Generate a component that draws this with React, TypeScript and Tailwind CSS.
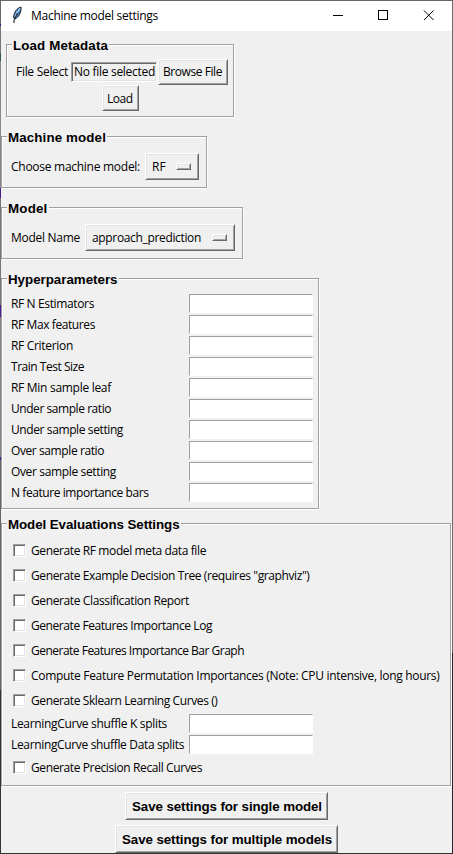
import { useLayoutEffect, useRef, useState, type ReactNode } from 'react';

/** Single line of text whose tracking is adjusted so that it spans `w` pixels. */
function Fit({ w, children, className = '' }: { w: number; children: string; className?: string }) {
  const ref = useRef<HTMLSpanElement>(null);
  const [tracking, setTracking] = useState(0);
  useLayoutEffect(() => {
    if (ref.current) {
      const natural = ref.current.getBoundingClientRect().width;
      setTracking((w - natural) / children.length);
    }
  }, []);
  return (
    <span ref={ref} className={`inline-block shrink-0 whitespace-pre ${className}`} style={{ letterSpacing: `${tracking}px` }}>
      {children}
    </span>
  );
}

function Group({ title, titleWidth, className, children }: { title: string; titleWidth: number; className: string; children: ReactNode }) {
  return (
    <section className={`flex flex-col border border-[#a0a0a0] shadow-[1px_1px_0_#fff,inset_1px_1px_0_#fff] ${className}`}>
      <h2 className="-mt-2 ml-[5px] flex h-4 w-fit shrink-0 items-center bg-[#f0f0f0] px-px pt-px font-['Liberation_Sans',Arial,sans-serif] text-[13.333px] font-bold leading-4">
        <Fit w={titleWidth}>{title}</Fit>
      </h2>
      {children}
    </section>
  );
}

const raised =
  'bg-[#f0f0f0] border border-t-white border-l-white border-b-[#696969] border-r-[#696969] shadow-[inset_1px_1px_0_#e3e3e3,inset_-1px_-1px_0_#a0a0a0]';
const sunken =
  'border border-t-[#a0a0a0] border-l-[#a0a0a0] border-b-white border-r-white shadow-[inset_1px_1px_0_#696969,inset_-1px_-1px_0_#e3e3e3]';

function Field({ label, w }: { label: string; w: number }) {
  return (
    <div className="flex h-[21px] items-center pl-[9px]">
      <div className="w-[178px] pt-px">
        <Fit w={w}>{label}</Fit>
      </div>
      <input className="h-[19px] w-[124px] border border-b-white border-l-[#a0a0a0] border-r-white border-t-[#a0a0a0] bg-white outline-none" />
    </div>
  );
}

function Check({ label, w }: { label: string; w: number }) {
  return (
    <label className="flex h-[25px] items-center gap-[5px] pl-[11px]">
      <span className={`size-[13px] bg-white ${sunken}`} />
      <Fit w={w}>{label}</Fit>
    </label>
  );
}

function Option({ label, w, className }: { label: string; w: number; className: string }) {
  return (
    <button className={`flex h-[27px] items-center justify-between pl-[6px] pr-[7px] ${raised} ${className}`}>
      <Fit w={w}>{label}</Fit>
      <span className={`h-[7px] w-[15px] ${raised}`} />
    </button>
  );
}

const fields: [string, number][] = [
  ['RF N Estimators', 83],
  ['RF Max features', 84],
  ['RF Criterion', 62],
  ['Train Test Size', 73],
  ['RF Min sample leaf', 100],
  ['Under sample ratio', 100],
  ['Under sample setting', 112],
  ['Over sample ratio', 93],
  ['Over sample setting', 105],
  ['N feature importance bars', 137.5],
];

const checks: [string, number][] = [
  ['Generate RF model meta data file', 175],
  ['Generate Example Decision Tree (requires "graphviz")', 278.5],
  ['Generate Classification Report', 158],
  ['Generate Features Importance Log', 181],
  ['Generate Features Importance Bar Graph', 213],
  ['Compute Feature Permutation Importances (Note: CPU intensive, long hours)', 408.5],
  ['Generate Sklearn Learning Curves ()', 186.5],
];

export default function App() {
  return (
    <div className="flex h-[854px] w-[453px] overflow-hidden bg-[#f0f0f0] font-['Open_Sans','Noto_Sans',sans-serif] text-[12px] leading-4 text-black">
      <div className="w-px shrink-0 bg-[linear-gradient(#666_0_24px,#2a1a80_24px_26px,#777_26px_53px,#355_53px_61px,#888_61px_188px,#4a1a90_188px_198px,#777_198px_305px,#4a1a90_305px_317px,#888_317px_457px,#4a1a90_457px_460px,#666_460px_690px,#333_690px)]" />
      <div className="flex h-[854px] w-[451px] shrink-0 flex-col border-b border-t border-b-[#333] border-t-[#666]">
        <header className="flex h-[30px] shrink-0 items-center bg-white">
          <svg className="mb-[3px] ml-[10px] mr-[8px]" width="12" height="18" viewBox="0 0 12 18">
            <path d="M10 1C6 2 3 6 2.5 11.5L4 13C8 11 10.5 6 10 1Z" fill="#3f78b8" stroke="#1b2430" strokeWidth="1" />
            <path d="M9 2.5C6.500 5 5 8 4 11" fill="none" stroke="#a9d2f5" strokeWidth="1.500" />
            <path d="M6.500 7L3 14V17" fill="none" stroke="#111" strokeWidth="1" />
          </svg>
          <Fit w={127}>Machine model settings</Fit>
          <svg className="mb-px ml-auto mr-[17px]" width="102" height="11" viewBox="0 0 102 11" fill="none" stroke="#000">
            <path d="M0 5.500H10M45.500 .5H54.500V9.500H45.500Z" shapeRendering="crispEdges" />
            <path d="M91 .5L100.500 10M100.500 .5L91 10" />
          </svg>
        </header>

        <Group title="Load Metadata" titleWidth={95} className="ml-[5px] mt-[13px] h-[73px] w-[228px] shrink-0">
          <div className="mt-[6px] flex h-[26px] items-center pl-[9px]">
            <div className="w-[55px]">
              <Fit w={52}>File Select</Fit>
            </div>
            <div className={`mr-px flex h-[20px] w-[86px] items-center pl-[2px] ${sunken}`}>
              <Fit w={81}>No file selected</Fit>
            </div>
            <button className={`flex h-[26px] w-[70px] items-center pl-1 ${raised}`}>
              <Fit w={59}>Browse File</Fit>
            </button>
          </div>
          <button className={`ml-[95px] flex h-[26px] w-[37px] items-center pl-1 pt-px ${raised}`}>
            <Fit w={25.5}>Load</Fit>
          </button>
        </Group>

        <Group title="Machine model" titleWidth={98} className="mt-[19px] h-[52px] w-[206px] shrink-0">
          <div className="mt-2 flex items-center pl-[9px]">
            <div className="w-[134px]">
              <Fit w={129}>Choose machine model:</Fit>
            </div>
            <Option label="RF" w={14} className="w-[54px]" />
          </div>
        </Group>

        <Group title="Model" titleWidth={39.5} className="mt-[19px] h-[52px] w-[242px] shrink-0">
          <div className="mt-2 flex items-center pl-[9px]">
            <div className="w-[74px]">
              <Fit w={69}>Model Name</Fit>
            </div>
            <Option label="approach_prediction" w={109} className="w-[150px]" />
          </div>
        </Group>

        <Group title="Hyperparameters" titleWidth={109.5} className="mt-[19px] h-[231px] w-[318px] shrink-0">
          <div className="mt-[6px]">
            {fields.map(([label, w]) => (
              <Field key={label} label={label} w={w} />
            ))}
          </div>
        </Group>

        <Group title="Model Evaluations Settings" titleWidth={171.5} className="mt-[14px] h-[263px] w-[450px] shrink-0">
          <div className="mt-[6px]">
            {checks.map(([label, w]) => (
              <Check key={label} label={label} w={w} />
            ))}
            <Field label="LearningCurve shuffle K splits" w={156} />
            <Field label="LearningCurve shuffle Data splits" w={173} />
            <Check label="Generate Precision Recall Curves" w={171} />
          </div>
        </Group>

        <div className="mt-[6px] flex flex-col items-center gap-[5px] font-['Liberation_Sans',Arial,sans-serif] text-[13.333px] font-bold">
          <button className={`flex h-[28px] w-[203px] shrink-0 items-center justify-center pl-px pt-px ${raised}`}>
            <Fit w={190}>Save settings for single model</Fit>
          </button>
          <button className={`flex h-[28px] w-[223px] shrink-0 items-center justify-center pl-px pt-px ${raised}`}>
            <Fit w={210}>Save settings for multiple models</Fit>
          </button>
        </div>
      </div>
      <div className="w-px shrink-0 bg-[linear-gradient(#6a6a6a_0_653px,#26262e_653px)]" />
    </div>
  );
}
